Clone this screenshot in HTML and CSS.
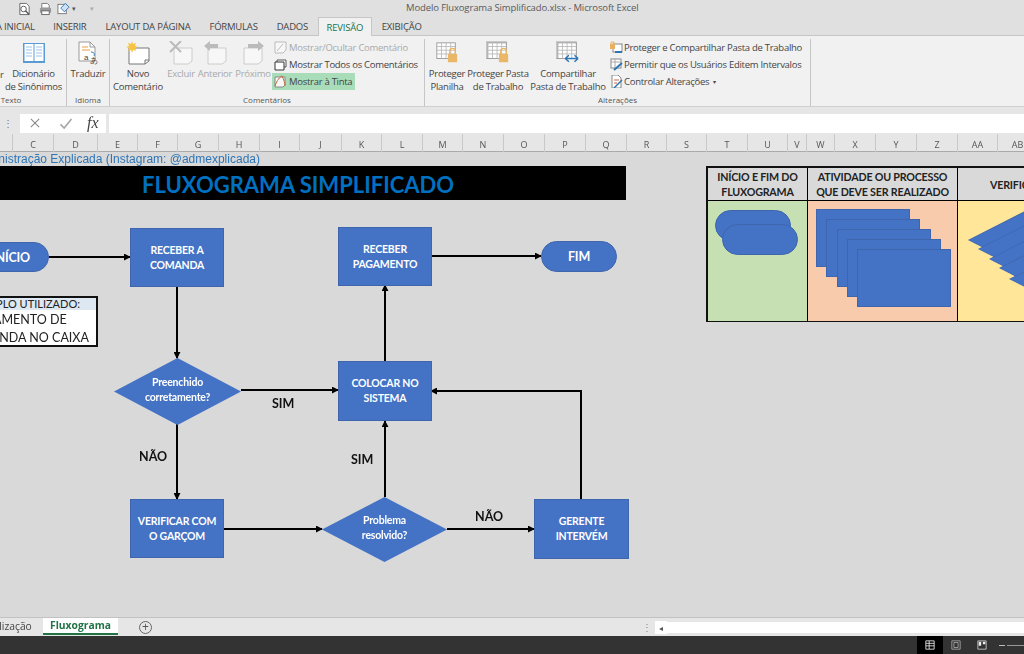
FILE: index.html
```html
<!DOCTYPE html>
<html lang="pt-BR">
<head>
<meta charset="utf-8">
<title>Modelo Fluxograma Simplificado.xlsx - Microsoft Excel</title>
<link rel="stylesheet" href="styles.css">
</head>
<body>
<div class="app">
  <header class="titlebar">
    <div class="qat">
      <svg class="qat-ico" viewBox="0 0 14 14"><path d="M2 1h7l3 3v9H2z" fill="#fff" stroke="#666"/><circle cx="6" cy="7" r="3" fill="none" stroke="#555"/><path d="M8 9l4 4" stroke="#555" stroke-width="1.5"/></svg>
      <svg class="qat-ico qat-print" viewBox="0 0 14 14"><path d="M3 1h6l2 2v3H3z" fill="#fff" stroke="#777"/><rect x="1" y="6" width="12" height="5" fill="#999"/><rect x="3" y="9" width="8" height="4" fill="#fff" stroke="#666"/></svg>
      <svg class="qat-ico" viewBox="0 0 14 14"><rect x="1" y="2" width="9" height="10" fill="#fff" stroke="#777"/><path d="M9 1l4 4-5 5-4-4z" fill="#cfe2f5" stroke="#2e75b6"/></svg>
      <span class="caret">▾</span>
      <span class="caret caret-far">▾</span>
    </div>
    <div class="doc-title">Modelo Fluxograma Simplificado.xlsx - Microsoft Excel</div>
  </header>

  <nav class="tabs">
    <span class="tab tab-first">A INICIAL</span>
    <span class="tab">INSERIR</span>
    <span class="tab">LAYOUT DA PÁGINA</span>
    <span class="tab">FÓRMULAS</span>
    <span class="tab">DADOS</span>
    <span class="tab tab-active">REVISÃO</span>
    <span class="tab">EXIBIÇÃO</span>
  </nav>

  <section class="ribbon">
    <div class="group group-texto">
      <div class="group-body">
        <div class="btn btn-cut"><span class="btn-label">r</span></div>
        <div class="btn btn-dict">
          <svg class="ico-big" viewBox="0 0 24 24"><rect x="1" y="2" width="22" height="20" fill="#5b9bd5"/><rect x="2.5" y="3" width="9" height="17" fill="#fff"/><rect x="12.5" y="3" width="9" height="17" fill="#fff"/><path d="M4 6h6M4 9h6M4 12h6M4 15h6M14 6h6M14 9h6M14 12h6M14 15h6" stroke="#9dc3e6"/></svg>
          <span class="btn-label">Dicionário<br>de Sinônimos</span>
        </div>
      </div>
      <div class="group-name">Texto</div>
    </div>
    <div class="group group-idioma">
      <div class="group-body">
        <div class="btn btn-trad">
          <svg class="ico-big" viewBox="0 0 24 24"><path d="M3 1h11l5 5v14H3z" fill="#fff" stroke="#999"/><path d="M6 6h6M6 9h8" stroke="#ed9b40"/><path d="M14 1v5h5" fill="none" stroke="#999"/><text x="8" y="19" class="ico-text">a</text><text x="14" y="22" class="ico-text">あ</text><path d="M15 11c3 0 4 2 3 4" fill="none" stroke="#2e75b6"/></svg>
          <span class="btn-label">Traduzir</span>
        </div>
      </div>
      <div class="group-name">Idioma</div>
    </div>
    <div class="group group-coment">
      <div class="group-body">
        <div class="btn btn-novo">
          <svg class="ico-big" viewBox="0 0 24 24"><path d="M3 7h20v13l-4 3H3z" fill="#fff" stroke="#777"/><path d="M19 23v-4h4" fill="none" stroke="#777"/><path d="M6 0l1 3 3-1-1 3 3 1-3 1 1 3-3-1-1 3-1-3-3 1 1-3-3-1 3-1-1-3 3 1z" fill="#f6c342"/></svg>
          <span class="btn-label">Novo<br>Comentário</span>
        </div>
        <div class="btn btn-off btn-excl">
          <svg class="ico-big" viewBox="0 0 24 24"><path d="M5 7h18v13l-4 3H5z" fill="#f7f7f7" stroke="#ccc"/><path d="M1 0l11 11M12 0L1 11" stroke="#bbb" stroke-width="2"/></svg>
          <span class="btn-label">Excluir</span>
        </div>
        <div class="btn btn-off btn-ant">
          <svg class="ico-big" viewBox="0 0 24 24"><path d="M5 7h18v13l-4 3H5z" fill="#f7f7f7" stroke="#ccc"/><path d="M1 5l6-5v3h8v4H7v3z" fill="#bbb"/></svg>
          <span class="btn-label">Anterior</span>
        </div>
        <div class="btn btn-off btn-prox">
          <svg class="ico-big" viewBox="0 0 24 24"><path d="M3 7h18v13l-4 3H3z" fill="#f7f7f7" stroke="#ccc"/><path d="M23 5l-6-5v3H7v4h10v3z" fill="#bbb"/></svg>
          <span class="btn-label">Próximo</span>
        </div>
        <ul class="small-list">
          <li class="small small-off"><svg class="ico-small" viewBox="0 0 13 13"><path d="M1 1h11v8l-3 3H1z" fill="#f7f7f7" stroke="#bbb"/><path d="M3 10l6-7" stroke="#bbb"/></svg>Mostrar/Ocultar Comentário</li>
          <li class="small"><svg class="ico-small" viewBox="0 0 13 13"><path d="M3 2h9v7h-9z" fill="#fff" stroke="#555"/><path d="M1 4h9v8H1z" fill="#fff" stroke="#333"/></svg>Mostrar Todos os Comentários</li>
          <li class="small small-on"><svg class="ico-small" viewBox="0 0 13 13"><path d="M1 2h10v8l-2 2H1z" fill="#f7f7f7" stroke="#888"/><path d="M1 11C3 5 6 2 8 1c2 4 3 7 3 10" fill="none" stroke="#c8663a"/></svg>Mostrar à Tinta</li>
        </ul>
      </div>
      <div class="group-name">Comentários</div>
    </div>
    <div class="group group-alter">
      <div class="group-body">
        <div class="btn btn-plan">
          <svg class="ico-big" viewBox="0 0 26 24"><use href="#sheet-grid"/><use href="#lock-mark"/></svg>
          <span class="btn-label">Proteger<br>Planilha</span>
        </div>
        <div class="btn btn-pasta">
          <svg class="ico-big" viewBox="0 0 26 24"><rect x="0" y="0" width="22" height="18" fill="#ddd" stroke="#aaa"/><use href="#sheet-grid"/><use href="#lock-mark"/></svg>
          <span class="btn-label">Proteger Pasta<br>de Trabalho</span>
        </div>
        <div class="btn btn-comp">
          <svg class="ico-big" viewBox="0 0 26 24"><rect x="0" y="0" width="22" height="18" fill="#ddd" stroke="#aaa"/><use href="#sheet-grid"/><path d="M10 18h14M10 18l4-3.500M10 18l4 3.500M24 18l-4-3.500M24 18l-4 3.500" stroke="#2e75b6" stroke-width="1.600" fill="none"/></svg>
          <span class="btn-label">Compartilhar<br>Pasta de Trabalho</span>
        </div>
        <ul class="small-list small-list-alter">
          <li class="small"><svg class="ico-small" viewBox="0 0 13 13"><rect x="3" y="3" width="9" height="8" fill="#fff" stroke="#888"/><rect x="0" y="3" width="5" height="5" fill="#e9b15f"/><path d="M1 3V1h3v2" fill="none" stroke="#e9b15f"/><path d="M5 11h7" stroke="#2e75b6" stroke-width="2"/></svg>Proteger e Compartilhar Pasta de Trabalho</li>
          <li class="small"><svg class="ico-small" viewBox="0 0 13 13"><rect x="1" y="1" width="10" height="9" fill="#fff" stroke="#888"/><path d="M1 4h10M5 1v9" stroke="#aaa"/><path d="M4 12l8-7" stroke="#2e75b6" stroke-width="2"/></svg>Permitir que os Usuários Editem Intervalos</li>
          <li class="small"><svg class="ico-small" viewBox="0 0 13 13"><path d="M2 0h6l3 3v10H2z" fill="#fff" stroke="#888"/><path d="M4 5h5M4 8h3" stroke="#c8663a"/><path d="M4 13l8-8" stroke="#2e75b6" stroke-width="1.500"/></svg>Controlar Alterações <span class="mini-caret">▾</span></li>
        </ul>
      </div>
      <div class="group-name">Alterações</div>
    </div>
    <div class="group-end"></div>
  </section>

  <svg class="defs" width="0" height="0">
    <defs>
      <g id="sheet-grid"><rect x="2" y="1" width="20" height="17" fill="#fff" stroke="#999"/><path d="M2 5h20M2 9h20M2 13h20M7 1v17M12 1v17M17 1v17" stroke="#bbb"/></g>
      <g id="lock-mark"><rect x="14" y="13" width="10" height="9" fill="#eab766"/><path d="M16 13v-3a3 3 0 0 1 6 0v3" fill="none" stroke="#eab766" stroke-width="1.500"/></g>
    </defs>
  </svg>

  <div class="formula">
    <span class="formula-grip">⋮</span>
    <div class="formula-btns">
      <svg class="f-x" viewBox="0 0 12 12"><path d="M1 1l10 10M11 1L1 11" stroke="#8a8a8a" stroke-width="1.300"/></svg>
      <svg class="f-c" viewBox="0 0 14 12"><path d="M1 7l4 4 8-10" fill="none" stroke="#a8a8a8" stroke-width="1.800"/></svg>
      <span class="f-fx">fx</span>
    </div>
    <div class="formula-input"></div>
  </div>

  <div class="colhead">
    <span></span><span>C</span><span>D</span><span>E</span><span>F</span><span>G</span><span>H</span><span>I</span><span>J</span><span>K</span><span>L</span><span>M</span><span>N</span><span>O</span><span>P</span><span>Q</span><span>R</span><span>S</span><span>T</span><span>U</span><span>V</span><span>W</span><span>X</span><span>Y</span><span>Z</span><span>AA</span><span>AB</span>
  </div>

  <main class="sheet">
    <div class="credit">Administração Explicada (Instagram: @admexplicada)</div>
    <div class="banner"><h1>FLUXOGRAMA SIMPLIFICADO</h1></div>

    <svg class="wires" width="1024" height="466" viewBox="0 152 1024 466">
      <defs>
        <marker id="tip" viewBox="0 0 8 8" refX="7" refY="4" markerWidth="7" markerHeight="7" markerUnits="userSpaceOnUse" orient="auto"><path d="M0 0l8 4-8 4z" fill="#000"/></marker>
      </defs>
      <g class="wire">
        <path marker-end="url(#tip)" d="M49 257H130"/>
        <path marker-end="url(#tip)" d="M177 286V358"/>
        <path marker-end="url(#tip)" d="M241 390H338"/>
        <path marker-end="url(#tip)" d="M177 424V499"/>
        <path marker-end="url(#tip)" d="M224 529H322"/>
        <path marker-end="url(#tip)" d="M447 529H534"/>
        <path marker-end="url(#tip)" d="M385 497V421"/>
        <path marker-end="url(#tip)" d="M385 361V285"/>
        <path marker-end="url(#tip)" d="M431 256H541"/>
        <path marker-end="url(#tip)" d="M581 499V391H431"/>
      </g>
    </svg>

    <div class="node pill n-inicio">INÍCIO</div>
    <div class="node pill n-fim">FIM</div>
    <div class="node n-receber">RECEBER A<br>COMANDA</div>
    <div class="node n-pagamento">RECEBER<br>PAGAMENTO</div>
    <div class="node n-colocar">COLOCAR NO<br>SISTEMA</div>
    <div class="node n-verificar">VERIFICAR COM<br>O GARÇOM</div>
    <div class="node n-gerente">GERENTE<br>INTERVÉM</div>
    <div class="node diamond n-preenchido">Preenchido<br>corretamente?</div>
    <div class="node diamond n-problema">Problema<br>resolvido?</div>

    <span class="flow-label l-sim1">SIM</span>
    <span class="flow-label l-nao1">NÃO</span>
    <span class="flow-label l-sim2">SIM</span>
    <span class="flow-label l-nao2">NÃO</span>

    <div class="note">
      <div class="note-head">EXEMPLO UTILIZADO:</div>
      <div class="note-line">FECHAMENTO DE</div>
      <div class="note-line">COMANDA NO CAIXA</div>
    </div>

    <div class="legend">
      <div class="lg-head lg-c1">INÍCIO E FIM DO<br>FLUXOGRAMA</div>
      <div class="lg-head lg-c2">ATIVIDADE OU PROCESSO<br>QUE DEVE SER REALIZADO</div>
      <div class="lg-head lg-c3">VERIFICAÇÃO</div>
      <div class="lg-cell lg-green">
        <i class="sp-pill sp-p1"></i><i class="sp-pill sp-p2"></i>
      </div>
      <div class="lg-cell lg-peach">
        <i class="sp-rect sp-r1"></i><i class="sp-rect sp-r2"></i><i class="sp-rect sp-r3"></i><i class="sp-rect sp-r4"></i><i class="sp-rect sp-r5"></i>
      </div>
      <div class="lg-cell lg-yellow">
        <i class="sp-dia sp-d1"></i><i class="sp-dia sp-d2"></i><i class="sp-dia sp-d3"></i><i class="sp-dia sp-d4"></i><i class="sp-dia sp-d5"></i>
      </div>
    </div>
  </main>

  <div class="sheetbar">
    <span class="sheet-prev">Atualização</span>
    <span class="sheet-tab">Fluxograma</span>
    <span class="sheet-add">+</span>
    <span class="sb-grip">⋮</span>
    <span class="sb-arrow">◂</span>
    <span class="sb-track"></span>
  </div>

  <footer class="status">
    <span class="view view-on"><svg viewBox="0 0 12 12"><path d="M1 1h10v10H1zM1 4h10M1 7h10M5 1v10" fill="none" stroke="#eee"/></svg></span>
    <span class="view"><svg viewBox="0 0 12 12"><path d="M1 1h10v10H1zM3.500 3h5v6h-5z" fill="none" stroke="#aaa"/></svg></span>
    <span class="view"><svg viewBox="0 0 12 12"><path d="M1 1h10v10H1z" fill="none" stroke="#ccc"/><path d="M2 2h3v5H2zM7 2h3v3H7z" fill="#eee"/></svg></span>
    <span class="zoom-minus"></span>
    <span class="zoom-line"></span>
  </footer>
</div>
</body>
</html>
```

FILE: styles.css
```css
* { box-sizing: border-box; }
html, body { margin: 0; padding: 0; height: 100%; }
body { overflow: hidden; background: #d9d9d9; }

.app {
  width: 1024px; height: 654px; overflow: hidden;
  display: flex; flex-direction: column;
  font-family: "Open Sans", "Noto Sans", sans-serif;
  color: #444;
  filter: blur(0.5px);
}

/* Title */
.titlebar { height: 17px; background: #e0e0e0; position: relative; display: flex; align-items: center; flex: none; }
.qat { display: flex; align-items: center; padding-left: 18px; gap: 5px; height: 14px; }
.qat-ico { width: 13px; height: 14px; }
.qat-print { margin-left: 3px; }
.caret { font-size: 7px; color: #555; margin-left: -3px; }
.caret-far { margin-left: 9px; color: #aaa; }
.doc-title { position: absolute; left: 406px; top: 1px; font-size: 9.500px; letter-spacing: -0.12px; line-height: 13px; color: #5a5a5a; white-space: nowrap; }

/* Tabs */
.tabs { height: 19px; background: #e0e0e0; display: flex; flex: none; border-bottom: 1px solid #c6c6c6; margin-left: -4px; width: 1028px; }
.tab { font-size: 9.500px; letter-spacing: -0.2px; line-height: 20px; padding: 0 9.500px; color: #444; white-space: nowrap; height: 18px; }
.tab-first { padding-left: 0; padding-right: 9px; }
.tab-active { color: #217346; background: #f1f1f1; border: 1px solid #c6c6c6; border-bottom: 0; height: 19px; padding: 0 8px; margin: 0 0 -1px; line-height: 19px; }

/* Ribbon */
.ribbon { height: 71px; background: #f1f1f1; display: flex; flex: none; border-bottom: 1px solid #cfcfcf; padding-top: 3px; }
.group { display: flex; flex-direction: column; height: 67px; border-right: 1px solid #c6c6c6; flex: none; }
.group-body { flex: 1; display: flex; min-height: 0; }
.group-name { height: 12px; font-size: 8px; line-height: 12px; text-align: center; color: #555; flex: none; }
.group-texto { width: 67px; }
.group-texto .group-name { width: 22px; }
.group-idioma { width: 43px; }
.group-coment { width: 315px; }
.group-alter { width: 386px; }
.group-end { flex: 1; }

.btn { display: flex; flex-direction: column; align-items: center; flex: none; padding-top: 1px; }
.btn-label { font-size: 9.500px; letter-spacing: -0.25px; line-height: 13px; text-align: center; white-space: nowrap; color: #444; margin-top: 2px; }
.btn-off .btn-label { color: #a9a9a9; }
.ico-big { width: 24px; height: 24px; flex: none; margin-top: 1px; }
.ico-text { font-size: 8px; fill: #444; font-family: "Liberation Sans", sans-serif; }

.btn-cut { width: 4px; overflow: visible; align-items: flex-start; }
.btn-cut .btn-label { margin-top: 28px; }
.btn-dict { width: 59px; }
.btn-trad { width: 42px; }
.btn-novo { width: 56px; }
.btn-excl { width: 30px; }
.btn-ant { width: 38px; }
.btn-prox { width: 38px; }
.btn-plan { width: 44px; }
.btn-pasta { width: 58px; }
.btn-comp { width: 82px; }

.small-list { list-style: none; margin: 0; padding: 0; display: flex; flex-direction: column; }
.small { height: 17px; display: flex; align-items: center; gap: 2px; font-size: 9.500px; letter-spacing: -0.28px; white-space: nowrap; color: #444; padding: 0 0 0 2px; width: max-content; }
.small-list-alter .small { padding-left: 1px; gap: 1px; }
.small-off { color: #a9a9a9; }
.small-on { background: #a9dcb8; padding-right: 3px; }
.ico-small { width: 13px; height: 13px; flex: none; }
.mini-caret { font-size: 6px; margin-left: 3px; }
.defs { position: absolute; }

/* Formula bar */
.formula { height: 27px; background: #e6e6e6; display: flex; align-items: center; flex: none; padding-top: 5px; }
.formula-grip { width: 20px; text-align: center; font-size: 10px; color: #777; line-height: 18px; padding-right: 4px; }
.formula-btns { width: 86px; height: 19px; background: #fff; display: flex; align-items: center; padding-left: 10px; }
.f-x { width: 10px; height: 10px; margin-right: 19px; }
.f-c { width: 14px; height: 11px; margin-right: 14px; }
.f-fx { font-family: "Liberation Serif", serif; font-style: italic; font-size: 16px; color: #444; }
.formula-input { flex: 1; height: 19px; margin-left: 3px; background: #fff; }

/* Column heads */
.colhead {
  height: 18px; background: #e6e6e6; flex: none; display: grid; border-bottom: 1px solid #aaa;
  grid-template-columns: 13px 41px 44px 40px 40px 41px 41px 40px 42px 40px 41px 40px 41px 41px 41px 41px 40px 40px 41px 40px 19px 28px 41px 41px 41px 40px 40px;
}
.colhead span { font-size: 9px; line-height: 21px; text-align: center; color: #555; border-right: 1px solid #c8c8c8; }

/* Sheet */
.sheet { height: 465px; flex: none; position: relative; overflow: hidden; background: #d9d9d9; font-family: Lato, sans-serif; }
.credit { position: absolute; left: -29px; top: 0; font: 12px/14px "Liberation Sans", sans-serif; color: #2e75b6; white-space: nowrap; }
.banner { position: absolute; left: 0; top: 14px; width: 626px; height: 34px; background: #000; }
.banner h1 { margin: 0; position: absolute; left: 142px; top: 4px; font-size: 22px; line-height: 30px; font-weight: 700; color: #0070c0; white-space: nowrap; }
.wires { position: absolute; left: 0; top: 0; }
.wire path { fill: none; stroke: #000; stroke-width: 2; }

.node {
  position: absolute; background: #4472c4; border: 1px solid #3f66ad; color: #fff;
  font-weight: 700; font-size: 10.500px; letter-spacing: -0.2px; line-height: 15px; text-align: center;
  display: flex; align-items: center; justify-content: center;
}
.pill { border-radius: 16px; font-size: 12.500px; }
.diamond { background: none; border: 0; z-index: 1; padding-bottom: 4px; }
.diamond::before { content: ""; position: absolute; inset: 0; background: #4472c4; clip-path: polygon(50% 0, 100% 50%, 50% 100%, 0 50%); z-index: -1; }
.n-inicio { left: -27px; top: 90px; width: 76px; height: 30px; }
.n-fim { left: 541px; top: 89px; width: 76px; height: 31px; }
.n-receber { left: 130px; top: 76px; width: 94px; height: 59px; }
.n-pagamento { left: 338px; top: 75px; width: 94px; height: 59px; }
.n-colocar { left: 338px; top: 209px; width: 94px; height: 60px; }
.n-verificar { left: 130px; top: 347px; width: 94px; height: 59px; }
.n-gerente { left: 534px; top: 347px; width: 95px; height: 60px; }
.n-preenchido { left: 114px; top: 206px; width: 127px; height: 67px; }
.n-problema { left: 322px; top: 345px; width: 125px; height: 65px; }

.flow-label { position: absolute; font-weight: 700; font-size: 12.500px; line-height: 15px; color: #111; }
.l-sim1 { left: 272px; top: 244px; }
.l-nao1 { left: 139px; top: 297px; }
.l-sim2 { left: 351px; top: 300px; }
.l-nao2 { left: 475px; top: 357px; }

.note { position: absolute; left: -42px; top: 144px; width: 140px; height: 51px; background: #fff; border: 2px solid #111; font-size: 12.500px; color: #222; white-space: nowrap; padding-left: 1px; }
.note-head { height: 12px; font-size: 11px; line-height: 12px; padding-left: 5px; background: #dde8f3; }
.note-line { line-height: 18px; position: relative; top: 1px; }

.legend {
  position: absolute; left: 706px; top: 14px; width: 520px; height: 156px; background: #000;
  display: grid; grid-template-columns: 99px 149px 266px; grid-template-rows: 32px 120px; gap: 1px; border: 2px solid #111;
}
.lg-head { background: #d9d9d9; display: flex; align-items: center; justify-content: center; text-align: center; font-weight: 700; font-size: 10.700px; letter-spacing: -0.2px; line-height: 15px; color: #222; white-space: nowrap; }
.lg-c3 { justify-content: flex-start; padding-left: 32px; }
.lg-cell { position: relative; overflow: hidden; }
.lg-green { background: #c6e0b4; }
.lg-peach { background: #f8cbad; }
.lg-yellow { background: #ffe699; }
.sp-pill, .sp-rect, .sp-dia { position: absolute; display: block; }
.sp-pill { width: 76px; height: 31px; background: #4472c4; border: 1px solid #3f66ad; border-radius: 16px; }
.sp-p1 { left: 7px; top: 9px; }
.sp-p2 { left: 14px; top: 23px; }
.sp-rect { width: 94px; height: 58px; background: #4472c4; border: 1px solid #3f66ad; }
.sp-r1 { left: 8px; top: 8px; }
.sp-r2 { left: 18px; top: 18px; }
.sp-r3 { left: 29px; top: 28px; }
.sp-r4 { left: 39px; top: 38px; }
.sp-r5 { left: 49px; top: 48px; }
.sp-dia { width: 126px; height: 64px; background: #3f66ad; clip-path: polygon(50% 0, 100% 50%, 50% 100%, 0 50%); }
.sp-dia::after { content: ""; position: absolute; inset: 1px; background: #4472c4; clip-path: polygon(50% 0, 100% 50%, 50% 100%, 0 50%); }
.sp-d1 { left: 10px; top: 7px; }
.sp-d2 { left: 20px; top: 16px; }
.sp-d3 { left: 31px; top: 26px; }
.sp-d4 { left: 41px; top: 35px; }
.sp-d5 { left: 51px; top: 46px; }

/* Sheet tabs */
.sheetbar { height: 19px; background: #e6e6e6; border-top: 1px solid #c2c2c2; display: flex; align-items: center; flex: none; position: relative; font-size: 10.300px; color: #444; }
.sheet-prev { margin-left: -23px; width: 66px; white-space: nowrap; margin-top: -3px; }
.sheet-tab { width: 75px; height: 17px; background: #fff; border-bottom: 2px solid #217346; color: #217346; font-weight: 700; text-align: center; line-height: 15px; align-self: flex-start; }
.sheet-add { width: 13px; height: 13px; border: 1px solid #666; border-radius: 50%; margin-left: 21px; margin-top: 1px; line-height: 10px; text-align: center; font-size: 12px; color: #555; }
.sb-grip { margin-left: 489px; width: 11px; color: #888; text-align: center; font-size: 10px; }
.sb-arrow { width: 12px; height: 13px; margin-left: 3px; background: #fff; font-size: 8px; line-height: 13px; text-align: center; color: #555; }
.sb-track { flex: 1; height: 11px; background: #fff; }

/* Status bar */
.status { height: 18px; background: #333; display: flex; align-items: center; flex: none; padding-left: 917px; }
.view { width: 26px; height: 18px; display: flex; align-items: center; justify-content: center; }
.view svg { width: 10px; height: 10px; }
.view-on { background: #000; }
.zoom-minus { width: 6px; height: 1px; background: #bbb; margin-left: 4px; }
.zoom-line { flex: 1; height: 1px; background: #999; margin-left: 2px; }
```
